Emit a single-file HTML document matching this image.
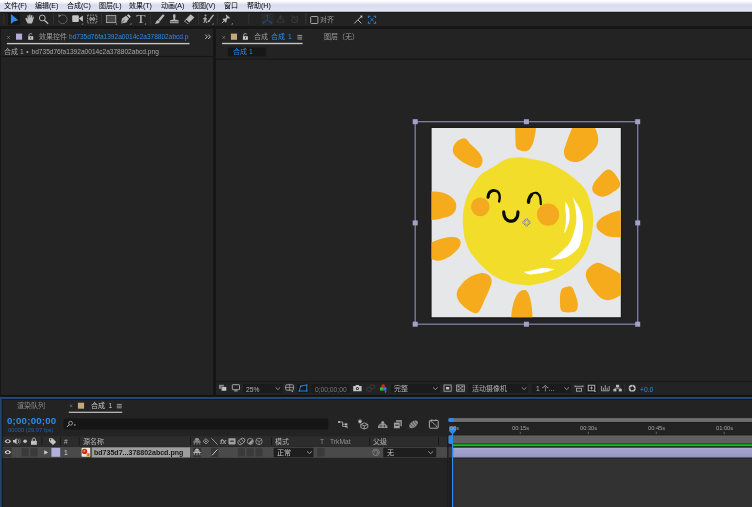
<!DOCTYPE html>
<html lang="zh-CN"><head><meta charset="utf-8"><title>After Effects</title>
<style>
html,body{margin:0;padding:0;background:#161616;}
body{width:752px;height:507px;position:relative;overflow:hidden;font-family:"Liberation Sans","Noto Sans CJK SC",sans-serif;color:#a8a8a8;}
.a{position:absolute;}
.t{position:absolute;white-space:nowrap;line-height:10px;height:10px;font-size:7px;will-change:transform;}
.l{font-size:6.7px;}
.b{color:#2d8ceb;}
#menubar{left:0;top:0;width:752px;height:11.8px;background:linear-gradient(#ffffff 0%,#f7f8fc 16%,#d8ddef 40%,#d8ddf0 58%,#e1e6f4 90%,#dcdfe9 100%);}
#menubar .t{color:#000;top:1px;}
#toolbar{left:0;top:11.6px;width:752px;height:14.5px;background:#232323;}
#leftpanel{left:1.3px;top:28.5px;width:212.2px;height:366.9px;background:#232323;}
#comppanel{left:215.5px;top:28.5px;width:536.5px;height:366.9px;background:#232323;}
#timeline{left:0;top:397px;width:752px;height:110px;background:#232323;}
.dd{position:absolute;background:#1b1b1b;border-radius:1.5px;}
svg{position:absolute;left:0;top:0;}
</style></head><body>
<div id="menubar" class="a">
<span class="t" style="left:4px">文件(F)</span>
<span class="t" style="left:35px">编辑(E)</span>
<span class="t" style="left:66.5px">合成(C)</span>
<span class="t" style="left:98.5px">图层(L)</span>
<span class="t" style="left:129px">效果(T)</span>
<span class="t" style="left:160.5px">动画(A)</span>
<span class="t" style="left:192.4px">视图(V)</span>
<span class="t" style="left:224.2px">窗口</span>
<span class="t" style="left:246.5px">帮助(H)</span>
</div>
<div id="toolbar" class="a"></div>
<div id="leftpanel" class="a"></div>
<div id="comppanel" class="a"></div>
<div id="timeline" class="a"></div>
<!--SUN-->
<svg id="sun" width="752" height="507" viewBox="0 0 752 507">
<!-- comp image -->
<rect x="430.2" y="126.6" width="192" height="192" fill="#1c1c1c"/>
<g transform="translate(431.6,128) scale(0.9958)">
<rect x="0" y="0" width="190" height="190" fill="#e6e7e8"/>
<clipPath id="cp"><rect x="0" y="0" width="190" height="190"/></clipPath>
<g clip-path="url(#cp)" fill="#f5ab1c">
<!-- rays -->
<path d="M21.3,21.7 C22,16 26,11.5 32.5,10.3 C35.5,10.5 37,13.5 38.5,15.8 C42,19 46,22 48.3,25.6 C50.5,28.5 52,32 50.9,34.5 C50.5,37.5 48.5,39.8 46.4,40 C44,40.3 41.5,39.5 39.4,38.5 C35,36.5 31,34.5 27.6,31.6 C24,29 21,26 21.3,21.7Z"/>
<path d="M-2,63.8 C3,63.8 8,64 11.8,65 C16,66.5 19.5,68.5 21.7,71 C24,73.5 25,76 24.7,78 C24.8,81 24,83 22.7,84.8 C20.5,87.5 17.5,89 13.8,89.7 C9,91.5 4,92.3 -2,92.5Z"/>
<path d="M83.8,-2 L84.4,17.8 C85,20 86,21.5 87.8,22 C90,23 92.5,23.5 94.7,23.3 C96.5,23 98,22 98.9,20.7 C101,18 102.3,15 102.8,11.8 C104,7 104.8,3 104.8,-2Z"/>
<path d="M141.7,-2 C139,6 136,12 134.4,17.8 C133.3,20.5 132.5,23 133,25.6 C133.3,28.5 134.8,31 137.3,32.5 C140.5,34.5 144,34.5 147.2,33.9 C150.5,33 153,31.5 155,29.6 C159,26.5 162.5,23.5 165,19.7 C166.5,17.5 167.5,14.5 167.3,11.8 C167.5,7 165.5,2.5 163,-2Z"/>
<path d="M176.8,41.8 C173.5,43 171,45.5 168.9,48.3 C165.5,51.5 162.5,55 161.4,59.2 C160.8,62 161.8,64.5 164,66 C166.5,68 169,69 171.9,69 C176,68.5 179.5,66.5 182.7,64 C185,62.5 187.5,61 188.6,59.2 C189.5,57.5 189.5,55 188.6,53.3 C187,50 185,47 182.7,44.4 C181,42.5 179,41.2 176.8,41.8Z"/>
<path d="M192,82.5 C186,83 181,84.8 176.8,86.8 C173,88.3 170,90.3 167.9,92.7 C166.3,94.5 165.5,96.3 165.5,98 C165.5,100 166.5,101.8 167.9,103 C170.5,105.5 173.5,107.5 176.8,108.7 C181,109.8 186,110 192,109.7Z"/>
<path d="M166,135.4 C162.5,136.5 159.5,138.5 157,141.3 C155,143.5 154.5,146.5 155,149.2 C156,153.5 158.5,157.5 161,161 C163.5,164.5 166,167.5 168.9,169.9 C172,172 175.5,173.3 178.8,172.8 C183,172 187,170 192,166.5 L192,148 C186,144 180.5,141 174.8,138.3 C172,136.8 169,135 166,135.4Z"/>
<path d="M131.4,161 C133.5,160 136,159.3 138.3,159 C140.3,159 141.5,160.3 142.3,162 C143.8,165.5 145.2,169 146.2,172.8 C146.9,175.8 147,178.6 146.4,181.4 C145.7,183.4 144,184.6 142.3,184.9 C139,185.5 135.5,185.5 132.4,184.9 C130.6,184.2 129.6,182.5 129.2,180.5 C128.8,176 128.8,172.5 129,168.9 C129.2,166 129.8,162.5 131.4,161Z"/>
<path d="M79.9,192 C80,186.5 80.8,181.5 81.9,176.8 C83,172.5 84.5,168.8 86.8,165.9 C88.3,164 90.3,162.8 92.7,162.6 C93.5,162.5 94.3,162.6 94.9,163 C97,165 98.2,168 98.9,170.9 C100.5,177 101.2,183 101.4,192Z"/>
<path d="M49.3,145.8 C45.8,146.3 42.5,147.5 39.4,149.2 C35,151.8 31.3,155 28.6,159 C26.5,161.5 25.3,164 25.2,166.9 C25.3,170.5 27,174 29.6,176.8 C33,180.5 37.5,183.8 42.4,185.7 C44.3,186.3 46,186 47.3,184.7 C49.5,181.8 51,178.5 52.3,174.8 C54.8,169.5 57.3,164.5 59.2,159 C60,157 60.5,155 60.2,153 C60,150.5 58.5,148.3 56.2,147.2 C54,146 51.5,145.5 49.3,145.8Z"/>
<path d="M-2,115.5 C3,113.5 7.5,111.8 11.8,110.7 C15.5,109.8 20,109.3 23.7,109.7 C26.5,110 28.8,112 29.2,114.6 C29.3,117.5 27.8,120.3 25.6,122.5 C22.3,126 18.5,129.3 13.8,131.4 C11.5,132.5 8.5,133.5 5.9,133.4 C3,133.3 0,132 -2,130Z"/>
</g>
<!-- body -->
<path clip-path="url(#cp)" fill="#f2de2a" d="M84.8,29.5 C87.5,29.4 90.0,29.6 92.7,29.9 C95.4,30.2 98.0,30.6 100.7,31.1 C103.4,31.6 105.9,32.0 108.8,32.7 C111.7,33.4 114.8,33.9 118.0,35.1 C121.2,36.3 124.7,38.1 127.8,39.8 C130.9,41.5 133.7,43.4 136.7,45.5 C139.7,47.6 142.9,50.2 145.6,52.6 C148.3,55.0 150.9,57.3 152.8,59.8 C154.7,62.3 156.0,64.9 157.2,67.8 C158.4,70.7 159.3,74.6 160.0,77.3 C160.7,80.0 161.2,81.1 161.6,84.0 C162.0,86.9 162.4,90.6 162.2,94.6 C162.0,98.6 161.2,104.6 160.6,108.0 C160.0,111.4 159.1,112.9 158.4,115.0 C157.7,117.1 157.6,118.4 156.6,120.7 C155.6,123.0 154.1,126.3 152.4,128.9 C150.7,131.5 148.6,133.8 146.2,136.2 C143.8,138.6 141.1,141.2 138.0,143.4 C134.9,145.6 131.7,147.7 127.7,149.6 C123.8,151.5 119.1,153.3 114.3,154.7 C109.5,156.1 102.8,157.4 98.8,157.8 C94.8,158.2 93.5,157.7 90.4,157.4 C87.3,157.1 83.4,156.7 80.0,155.8 C76.6,154.9 73.2,153.7 69.8,152.1 C66.4,150.5 63.0,149.0 59.5,146.5 C56.0,144.0 52.0,140.1 49.1,137.2 C46.2,134.3 44.0,131.7 41.9,128.9 C39.8,126.2 38.2,123.4 36.8,120.7 C35.4,118.0 34.5,115.3 33.7,112.5 C32.9,109.7 32.5,106.9 32.1,103.6 C31.7,100.3 31.3,96.4 31.3,92.8 C31.3,89.2 31.5,85.5 32.1,81.9 C32.7,78.3 33.7,74.3 34.8,71.0 C35.9,67.7 37.1,65.5 38.9,62.3 C40.7,59.1 43.5,54.4 45.4,51.7 C47.3,49.0 47.7,48.0 50.1,46.1 C52.5,44.2 56.7,42.2 60.0,40.2 C63.3,38.2 66.9,35.7 69.7,34.1 C72.5,32.5 74.2,31.5 76.7,30.7 C79.2,29.9 82.1,29.6 84.8,29.5 Z"/>
<!-- cheeks -->
<circle cx="48.9" cy="79.2" r="9.4" fill="#f4aa20"/>
<circle cx="117" cy="86.9" r="11.2" fill="#f4aa20"/>
<!-- eyes / mouth -->
<g fill="none" stroke="#0b0b0b" stroke-linecap="round">
<path stroke-width="3.1" d="M56.7,69.6 C57,65.8 59,63 62,62.8"/>
<path stroke-width="2.4" d="M62,62.8 C65.5,62.8 67.6,64.5 68.2,67.2 C68.7,69.5 68.4,72 67.8,73.8"/>
<path stroke-width="3.4" d="M97.3,74.5 C97.5,71.5 98.7,68.6 100.4,66.9"/>
<path stroke-width="2.2" d="M100.4,66.9 C101.8,65.3 103.5,64.9 104.9,65.1 C107,65.6 108.3,67.3 108.9,69.2 C109.5,71.5 109.7,74 109.7,76.5"/>
<path stroke-width="3.2" d="M72.4,84.3 C72.4,87 73,89.3 74.2,90.8 C75.8,92.8 77.8,93.6 79.9,93.6 C82.3,93.5 84.3,92.3 85.6,90 C86.5,88.3 86.7,86.3 86.7,84.3"/>
</g>
<!-- highlights -->
<g fill="#ffffff">
<path d="M141.2,68.2 C141.6,68.9 142.5,70.4 143.6,72.3 C144.7,74.2 146.8,76.7 148.0,79.4 C149.2,82.1 150.4,85.4 151.1,88.4 C151.8,91.4 151.9,94.2 152.0,97.2 C152.1,100.2 151.9,103.7 151.6,106.2 C151.3,108.8 150.9,110.4 150.3,112.5 C149.8,114.6 149.3,116.8 148.3,118.7 C147.3,120.6 146.1,122.1 144.2,123.8 C142.3,125.5 139.4,127.7 137.0,129.0 C134.6,130.3 132.6,131.0 129.7,131.5 C126.8,132.0 121.1,131.9 119.4,132.0 C120.4,131.3 123.5,129.5 125.6,128.0 C127.7,126.5 129.9,124.5 131.8,122.8 C133.7,121.1 135.6,119.3 137.0,117.6 C138.4,115.9 139.3,114.1 140.1,112.5 C140.9,110.9 141.1,110.2 141.8,108.0 C142.5,105.8 143.9,102.0 144.5,99.0 C145.1,96.0 145.4,93.1 145.4,90.1 C145.4,87.1 144.9,84.2 144.5,81.2 C144.1,78.2 143.2,74.5 142.7,72.3 C142.1,70.1 141.4,68.9 141.2,68.2 Z"/>
<path d="M134.3,73.9 C134.8,74.8 136.7,77.1 137.4,79.4 C138.1,81.7 138.6,84.8 138.7,87.5 C138.8,90.2 138.5,92.8 137.8,95.5 C137.1,98.2 135.5,101.8 134.7,103.5 C133.9,105.2 133.4,105.1 133.1,105.4 C133.4,103.8 134.4,98.3 134.7,95.5 C135.0,92.7 135.0,90.8 134.9,88.4 C134.8,86.0 134.4,83.6 134.3,81.2 C134.2,78.8 134.3,75.1 134.3,73.9 Z"/>
<path d="M92.8,144.3 C93.8,144.2 96.1,144.0 98.8,143.4 C101.5,142.8 106.2,141.2 109.1,140.8 C112.0,140.4 113.6,140.7 116.0,140.9 C118.4,141.1 122.2,141.7 123.5,141.9 C122.4,142.3 119.0,143.6 117.0,144.2 C115.0,144.8 113.4,145.1 111.2,145.5 C109.0,145.9 106.1,146.3 104.0,146.6 C101.9,146.8 100.2,147.1 98.8,147.0 C97.4,146.9 96.5,146.8 95.5,146.3 C94.5,145.9 93.2,144.6 92.8,144.3 Z"/>
</g>
<!-- anchor -->
<g stroke="#6e6a55" stroke-width="1.5" fill="none">
<circle cx="95.4" cy="94.8" r="2.3"/>
<path d="M95.4,90.4 L95.4,92.5 M95.4,97.1 L95.4,99.2 M91,94.8 L93.1,94.8 M97.7,94.8 L99.8,94.8"/>
</g>
<g stroke="#d9d6b4" stroke-width="0.8" fill="none">
<circle cx="95.4" cy="94.8" r="2.3"/>
<path d="M95.4,90.4 L95.4,92.5 M95.4,97.1 L95.4,99.2 M91,94.8 L93.1,94.8 M97.7,94.8 L99.8,94.8"/>
</g>
</g>
<!-- selection box -->
<g fill="none" stroke="#807fa6" stroke-width="1.3">
<rect x="415.2" y="121.7" width="222.5" height="202.5"/>
</g>
<g fill="#a2a1cb">
<rect x="412.7" y="119.2" width="5" height="5"/><rect x="523.9" y="119.2" width="5" height="5"/><rect x="635.2" y="119.2" width="5" height="5"/>
<rect x="412.7" y="220.4" width="5" height="5"/><rect x="635.2" y="220.4" width="5" height="5"/>
<rect x="412.7" y="321.7" width="5" height="5"/><rect x="523.9" y="321.7" width="5" height="5"/><rect x="635.2" y="321.7" width="5" height="5"/>
</g>
</svg>

<!--/SUN-->
<svg id="chrome" width="752" height="507" viewBox="0 0 752 507">
<!-- toolbar -->
<rect x="0" y="11.8" width="752" height="1" fill="#191919"/>
<rect x="3.2" y="13.5" width="1.2" height="11" fill="#303030"/>
<rect x="8" y="12.8" width="12" height="12" rx="1" fill="#161616"/>
<path d="M10.9,14.1 L10.9,24 L13.7,21.6 L18.3,20.3 Z" fill="#2d8ceb"/>
<g fill="#b9b9b9" stroke="none">
<!-- hand -->
<path d="M25.2,18.4 L26.6,17.8 L27.6,19.6 L27.3,15.4 L28.4,15.2 L29,18 L29.2,14.6 L30.4,14.6 L30.6,18 L31.3,15 L32.4,15.2 L32.1,18.6 L33,16.6 L33.9,17 L32.8,21.4 L31.8,23.6 L27.8,23.6 L26.6,21.6 Z"/>
</g>
<!-- zoom -->
<g fill="none" stroke="#b4b4b4" stroke-width="1"><circle cx="42.3" cy="18" r="2.9"/><path d="M44.4,20.2 L48.2,23.7" stroke-width="1.4"/></g>
<g fill="#383838"><rect x="53" y="13.5" width="0.8" height="11"/><rect x="101" y="13.5" width="0.8" height="11"/><rect x="149.9" y="13.5" width="0.8" height="11"/><rect x="198" y="13.5" width="0.8" height="11"/><rect x="217.3" y="13.5" width="0.8" height="11"/><rect x="248.5" y="13.5" width="0.8" height="11"/><rect x="305.3" y="13.5" width="1.1" height="11"/></g>
<!-- rotate -->
<path d="M59.6,16.2 A4.4,4.4 0 1 1 58.5,20.5" fill="none" stroke="#5e5e5e" stroke-width="1"/>
<path d="M58.2,14.6 L61.4,15.2 L58.8,17.6 Z" fill="#8a8a8a"/>
<!-- camera -->
<rect x="72.2" y="15.3" width="6.6" height="6.7" rx="1" fill="#c4c4c4"/><path d="M78.8,18.6 L82.9,15.6 L82.9,21.8 Z" fill="#c4c4c4"/>
<path d="M83.2,23 L83.2,24.6 L81.6,24.6 Z" fill="#a0a0a0"/>
<!-- pan behind -->
<g fill="none" stroke="#b0b0b0" stroke-width="0.9" stroke-dasharray="1.4 1.1"><rect x="87.6" y="15.1" width="9.2" height="7.8"/></g>
<path d="M90,16.8 L92.2,19 L94.4,16.8 M90,21.2 L92.2,19 L94.4,21.2" stroke="#9a9a9a" stroke-width="1.1" fill="none"/>
<path d="M88.6,19 L90.6,17.8 L90.6,20.2 Z M95.8,19 L93.8,17.8 L93.8,20.2Z" fill="#b0b0b0"/>
<!-- rect tool -->
<rect x="106.4" y="15.4" width="9.4" height="7.2" fill="#474747" stroke="#a9a9a9" stroke-width="0.9"/>
<path d="M117,23 L117,24.6 L115.4,24.6 Z M131.4,23 L131.4,24.6 L129.8,24.6 Z M146,23 L146,24.6 L144.4,24.6 Z M213.6,23 L213.6,24.6 L212,24.6 Z M232.8,22.8 L232.8,24.4 L231.2,24.4 Z" fill="#a0a0a0"/>
<!-- pen -->
<path d="M121,23.4 L122,18.6 L126,15.8 L129,18.6 L126.4,22.4 Z" fill="#b9b9b9"/>
<path d="M126.8,15.2 L128.4,14.2 L130.8,16.6 L129.8,18 Z" fill="#cfcfcf"/>
<path d="M121.4,23 L124.6,19.8" stroke="#232323" stroke-width="0.7"/>
<!-- brush -->
<path d="M162.9,14.2 L164.6,15.4 L160,21.2 L158,19.8 Z" fill="#b9b9b9"/>
<path d="M157.6,20 L160,21.6 C159.4,23.4 157.2,24 154.7,23.7 C156,22.8 156,21 157.6,20Z" fill="#b9b9b9"/>
<!-- stamp -->
<path d="M173.4,14.2 L175.2,14.2 L175.6,16 L175,19.4 L178.4,20.2 L179,21.6 L169.6,21.6 L170.2,20.2 L173.6,19.4 L173,16 Z" fill="#b9b9b9"/>
<rect x="170" y="22.2" width="8.6" height="1" fill="#b9b9b9"/>
<!-- eraser -->
<path d="M184,21.2 L190.6,14.3 L194.4,17.6 L187.8,24.1 Z" fill="#b9b9b9"/>
<path d="M184.9,21.2 L186.3,19.8 L189.3,22.5 L187.9,23.5 Z" fill="#232323"/>
<!-- roto -->
<circle cx="205.5" cy="15.4" r="1" fill="#a4a4a4"/>
<path d="M203,18.4 L205.4,17 L207,18.4 L206.2,20.2 L207.2,23 L206,23 L205.2,20.8 L204.4,23 L203.4,23 L204.4,19.4 L203.4,19.6 Z" fill="#a4a4a4"/>
<path d="M213,14.4 L214,15.2 L210.4,20 L209.2,19.2 Z" fill="#b9b9b9"/>
<path d="M209,19.4 L210.4,20.4 C209.8,21.8 208.6,22.2 207,22.2 C208,21.4 208,20.2 209,19.4Z" fill="#b9b9b9"/>
<!-- pin -->
<path d="M226.2,14.6 L230.2,18 L229,18.6 L227.6,18.2 L226.4,20.6 L226.6,22.2 L225.6,22.4 L222.6,19.6 L223.2,18.6 L224.8,18.8 L226.6,17.2 L225.8,15.6 Z" fill="#b9b9b9"/>
<path d="M224.2,20.8 L221.8,23.2" stroke="#b9b9b9" stroke-width="0.9"/>
<!-- axis modes -->
<rect x="261.2" y="13.4" width="12.4" height="11.6" rx="1" fill="#2a2a2a"/>
<g stroke="#1f4d7e" stroke-width="0.9" fill="#1f4d7e"><path d="M267.4,15.8 L267.4,20 L263.6,22.6 M267.4,20 L271.2,22.6" fill="none"/><circle cx="267.4" cy="15.8" r="0.7"/><circle cx="263.6" cy="22.6" r="0.7"/><circle cx="271.2" cy="22.6" r="0.7"/></g>
<g stroke="#3f3f3f" stroke-width="0.8" fill="none"><path d="M280.6,15.6 L276.8,22.2 L284.4,22.2 Z M280.6,15.6 L280.6,19.6"/><path d="M291.4,15.4 L297.6,21.8 M291.8,18 L297.4,16.4 L297.2,22.4 L292,22.2 Z"/></g>
<!-- snapping -->
<rect x="310.7" y="16.5" width="7.2" height="7" rx="0.8" fill="none" stroke="#a4a4a4" stroke-width="1"/>
<path d="M354.4,23.4 L357.8,19.8 L361.4,23.4 M357.8,19.8 L361.6,16.4" stroke="#b4b4b4" stroke-width="1" fill="none"/><path d="M362.4,15.6 L362.2,18.2 L359.8,15.8 Z" fill="#c4c4c4"/>
<g stroke="#2a7fd4" stroke-width="1.1" fill="none"><path d="M368.4,18 L368.4,16.2 L370.4,16.2 M373.6,16.2 L375.6,16.2 L375.6,18 M375.6,21.4 L375.6,23.2 L373.6,23.2 M370.4,23.2 L368.4,23.2 L368.4,21.4"/><path d="M370.4,18.2 L373.6,21.2 M373.6,18.2 L370.4,21.2" stroke-width="0.9"/></g>

<!-- left panel tab -->
<path d="M7.2,36 L9.8,38.8 M9.8,36 L7.2,38.8" stroke="#8c8c8c" stroke-width="0.6" fill="none"/>
<rect x="16" y="33.6" width="6.1" height="6.1" fill="#b0addb"/>
<g fill="#c9c9c9"><rect x="28.2" y="36.2" width="5" height="3.6"/><path d="M29,36.4 L29,34.8 C29,33.4 31.6,33.2 32.2,34.4" stroke="#c9c9c9" stroke-width="0.8" fill="none"/></g>
<rect x="30.3" y="37.2" width="0.9" height="1.4" fill="#232323"/>
<rect x="6.9" y="42.9" width="182.6" height="1.4" fill="#c4c4c4"/>
<rect x="1.3" y="55.9" width="212" height="1.2" fill="#171717"/>
<path d="M205.2,34.6 L207.4,36.8 L205.2,39 M208.2,34.6 L210.4,36.8 L208.2,39" stroke="#d0d0d0" stroke-width="0.9" fill="none"/>
<!-- comp panel tab -->
<path d="M222.4,36 L225,38.8 M225,36 L222.4,38.8" stroke="#8c8c8c" stroke-width="0.6" fill="none"/>
<rect x="230.9" y="33.6" width="6.1" height="6.2" fill="#c4a877"/>
<g fill="#c9c9c9"><rect x="242.9" y="36.2" width="5" height="3.6"/><path d="M243.7,36.4 L243.7,34.8 C243.7,33.4 246.3,33.2 246.9,34.4" stroke="#c9c9c9" stroke-width="0.8" fill="none"/></g>
<rect x="245" y="37.2" width="0.9" height="1.4" fill="#232323"/>
<path d="M297.4,35.4 L302.2,35.4 M297.4,37.2 L302.2,37.2 M297.4,39 L302.2,39" stroke="#b4b4b4" stroke-width="0.8"/>
<rect x="222" y="42.8" width="80.6" height="1.4" fill="#c4c4c4"/>
<rect x="227.9" y="47.6" width="37.9" height="8.9" rx="1" fill="#171717"/>
<rect x="215.6" y="58.6" width="536.4" height="1" fill="#171717"/>
</svg>
<svg id="vbar" width="752" height="507" viewBox="0 0 752 507">
<rect x="215.6" y="381.2" width="536.4" height="1" fill="#171717"/>
<!-- always preview -->
<g><rect x="219" y="384.8" width="5" height="4" fill="#8a8a8a"/><rect x="221.2" y="386.8" width="5.4" height="4.2" fill="#c4c4c4" stroke="#232323" stroke-width="0.5"/></g>
<!-- monitor -->
<rect x="232.3" y="384.7" width="7.2" height="5" rx="0.6" fill="none" stroke="#b4b4b4" stroke-width="0.9"/><rect x="234.2" y="390.4" width="3.4" height="1" fill="#b4b4b4"/>
<!-- dropdown 25% -->
<rect x="243" y="384" width="39.6" height="8.8" rx="1" fill="#1b1b1b"/>
<path d="M275.6,387.4 L277.9,389.6 L280.2,387.4" stroke="#a9a9a9" stroke-width="0.8" fill="none"/>
<!-- grid -->
<rect x="285.8" y="384.8" width="7.6" height="5.4" rx="0.6" fill="none" stroke="#b4b4b4" stroke-width="0.8"/><path d="M289.6,383.8 L289.6,391 M285,387.5 L294.2,387.5" stroke="#b4b4b4" stroke-width="0.6"/><path d="M291.4,391 L293.4,391 L292.4,392.2 Z" fill="#b4b4b4"/>
<!-- mask -->
<rect x="297" y="383.8" width="12" height="9.2" rx="1" fill="#171717"/>
<path d="M299.2,391 L300.8,386 L306.8,385 L306.8,391 Z" fill="none" stroke="#2d8ceb" stroke-width="0.9"/>
<g fill="#2d8ceb"><rect x="298.6" y="390.3" width="1.3" height="1.3"/><rect x="300.2" y="385.4" width="1.3" height="1.3"/><rect x="306.2" y="384.4" width="1.3" height="1.3"/><rect x="306.2" y="390.3" width="1.3" height="1.3"/></g>
<!-- timecode -->
<rect x="310.5" y="384" width="39.8" height="8.8" rx="1" fill="#1b1b1b"/>
<!-- camera -->
<path d="M353.2,386 L355.4,386 L356,385 L358.8,385 L359.4,386 L361.6,386 L361.6,391.2 L353.2,391.2 Z" fill="#c4c4c4"/><circle cx="357.4" cy="388.5" r="1.5" fill="#232323"/><circle cx="357.4" cy="388.5" r="0.7" fill="#c4c4c4"/>
<!-- show snapshot (dim) -->
<g fill="none" stroke="#3d3d3d" stroke-width="0.9"><ellipse cx="369" cy="389.4" rx="2.6" ry="2"/><ellipse cx="372.4" cy="386.8" rx="2.6" ry="2"/></g>
<!-- rgb -->
<circle cx="383.2" cy="386.1" r="1.9" fill="#e02020"/><circle cx="381.6" cy="388.9" r="1.9" fill="#20c030"/><circle cx="384.8" cy="388.9" r="1.9" fill="#3a6ff0"/>
<path d="M384.6,391.6 L386.6,391.6 L385.6,392.8 Z" fill="#b4b4b4"/>
<!-- dropdown full -->
<rect x="391" y="384" width="48.8" height="8.8" rx="1" fill="#1b1b1b"/>
<path d="M433.1,387.4 L435.4,389.6 L437.7,387.4" stroke="#a9a9a9" stroke-width="0.8" fill="none"/>
<!-- region of interest -->
<rect x="444" y="385" width="7.2" height="6.2" fill="none" stroke="#b4b4b4" stroke-width="0.8"/><rect x="446" y="387" width="3.2" height="2.4" fill="#c4c4c4"/>
<!-- transparency grid -->
<rect x="456.7" y="385" width="7.6" height="6.2" fill="none" stroke="#b4b4b4" stroke-width="0.8"/>
<g fill="#9a9a9a"><rect x="457.6" y="385.9" width="1.9" height="1.5"/><rect x="461.4" y="385.9" width="1.9" height="1.5"/><rect x="459.5" y="387.4" width="1.9" height="1.5"/><rect x="457.6" y="388.9" width="1.9" height="1.5"/><rect x="461.4" y="388.9" width="1.9" height="1.5"/></g>
<!-- dropdown camera -->
<rect x="468.3" y="384" width="59.4" height="8.8" rx="1" fill="#1b1b1b"/>
<path d="M521.8,387.4 L524.1,389.6 L526.4,387.4" stroke="#a9a9a9" stroke-width="0.8" fill="none"/>
<rect x="531.8" y="384" width="39.3" height="8.8" rx="1" fill="#1b1b1b"/>
<path d="M564.4,387.4 L566.7,389.6 L569,387.4" stroke="#a9a9a9" stroke-width="0.8" fill="none"/>
<!-- icons right -->
<path d="M575,385.4 L575,387.2 M583,385.4 L583,387.2 M575,386.3 L583,386.3" stroke="#b4b4b4" stroke-width="0.8" fill="none"/><rect x="576.6" y="388.2" width="4.8" height="3" fill="none" stroke="#b4b4b4" stroke-width="0.8"/>
<rect x="586" y="383.8" width="11" height="9.2" rx="1" fill="#171717"/>
<rect x="588.2" y="385.2" width="6.6" height="5.6" fill="none" stroke="#c4c4c4" stroke-width="0.9"/><path d="M589.8,388 L593.2,388 M591.5,386.4 L591.5,389.6" stroke="#c4c4c4" stroke-width="0.7"/><path d="M594,391 L596,391 L595,392.2 Z" fill="#c4c4c4"/>
<path d="M601.4,386 L601.4,390.8 L609.2,390.8 L609.2,386" fill="none" stroke="#b4b4b4" stroke-width="0.8"/><path d="M603.4,390.4 L603.4,387.6 M605.3,390.4 L605.3,385 M607.2,390.4 L607.2,387.6" stroke="#b4b4b4" stroke-width="0.8"/>
<g fill="#b9b9b9"><rect x="616" y="384.8" width="3.2" height="2.4"/><rect x="613.4" y="389" width="3" height="2.4"/><rect x="618.8" y="389" width="3" height="2.4"/></g><path d="M617.6,387.2 L617.6,388.2 M614.9,389 L614.9,388.2 L620.3,388.2 L620.3,389" stroke="#b9b9b9" stroke-width="0.7" fill="none"/>
<rect x="624.4" y="384.4" width="0.7" height="8" fill="#383838"/>
<circle cx="632.2" cy="388.3" r="2.7" fill="none" stroke="#c4c4c4" stroke-width="1.6"/>
<path d="M632.2,385 L633.4,388.3 M635.4,388.3 L632.2,389.5 M632.2,391.6 L631,388.3 M629,388.3 L632.2,387.1" stroke="#232323" stroke-width="0.5"/>
</svg>
<svg id="tl" width="752" height="507" viewBox="0 0 752 507">
<rect x="0" y="395.4" width="752" height="1.5" fill="#131211"/><rect x="0" y="396.9" width="752" height="2.2" fill="#24466f"/>
<rect x="0" y="396.8" width="1.8" height="111" fill="#24466f"/>
<rect x="1.8" y="399.1" width="750.2" height="0.8" fill="#171615"/>
<rect x="1.8" y="399" width="0.8" height="108" fill="#181818"/>
<!-- tabs -->
<path d="M70,404.6 L72.2,407 M72.2,404.6 L70,407" stroke="#8c8c8c" stroke-width="0.6" fill="none"/>
<rect x="77.9" y="402.7" width="6.2" height="6" fill="#c4a877"/>
<path d="M116.8,404.4 L121.8,404.4 M116.8,406.1 L121.8,406.1 M116.8,407.8 L121.8,407.8" stroke="#b4b4b4" stroke-width="0.8"/>
<rect x="68.8" y="411.7" width="53.4" height="1.2" fill="#c4c4c4"/>
<!-- search -->
<rect x="63.5" y="418.6" width="264.8" height="10.8" rx="1.6" fill="#161616"/>
<circle cx="70.6" cy="423.2" r="1.9" fill="none" stroke="#b4b4b4" stroke-width="0.8"/><path d="M69.2,424.6 L66.9,427" stroke="#b4b4b4" stroke-width="1"/><path d="M73.6,424.6 L76,424.6 L74.8,426 Z" fill="#b4b4b4"/>
<!-- header icons right of search -->
<g stroke="#b9b9b9" stroke-width="0.8" fill="#b9b9b9"><path d="M338.4,422 L342.6,422 M342.6,422 L342.6,426.4 L345.6,426.4 M342.6,424.2 L345.6,424.2" fill="none"/><rect x="338" y="421.2" width="2" height="1.6" stroke="none"/><rect x="345" y="423.4" width="2.4" height="1.6" stroke="none"/><rect x="345" y="425.6" width="2.4" height="1.6" stroke="none"/><path d="M346.4,427.6 L348,427.6 L347.2,428.6 Z" stroke="none"/></g>
<g fill="none" stroke="#b9b9b9" stroke-width="0.8"><circle cx="360" cy="421.6" r="1.4" fill="#b9b9b9"/><path d="M364.2,422.8 L367.8,424.4 L367.8,427.6 L364.2,429 L360.8,427.6 L360.8,424.4 Z M360.8,424.4 L364.2,425.8 L367.8,424.4 M364.2,425.8 L364.2,429"/><path d="M358,419.6 L358.8,420.4 M362,419.6 L361.2,420.4 M360,418.8 L360,419.8" stroke-width="0.5"/></g>
<g fill="#9c9c9c"><circle cx="382.7" cy="422.6" r="1.5"/><path d="M380.6,423.6 L384.8,423.6 L387.4,425.8 L387.4,428 L378,428 L378,425.8 Z"/></g><path d="M381,424.6 L381,427.6 M384.4,424.6 L384.4,427.6" stroke="#232323" stroke-width="0.6"/><path d="M378,426 L387.4,426" stroke="#232323" stroke-width="0.4"/>
<g><rect x="396" y="420" width="6" height="6.2" fill="#858585"/><rect x="393.8" y="422.2" width="6.2" height="6.4" fill="#a4a4a4" stroke="#232323" stroke-width="0.6"/><rect x="395.2" y="424.6" width="3.4" height="1.2" fill="#303030"/></g>
<g transform="rotate(-38 413.6 424.3)"><ellipse cx="413.6" cy="424.3" rx="5" ry="3" fill="#8e8e8e"/><path d="M411.2,421.6 L411.2,427 M413.6,421.4 L413.6,427.2 M416,421.6 L416,427" stroke="#3a3a3a" stroke-width="0.6"/></g>
<rect x="429.4" y="420.4" width="8.8" height="7.8" rx="0.8" fill="none" stroke="#b9b9b9" stroke-width="0.9"/><path d="M430.4,421.2 C433,422.2 435,424.4 437.4,427.4" fill="none" stroke="#b9b9b9" stroke-width="0.8"/><path d="M431.8,419.4 L431.8,420.4 M435.8,419.4 L435.8,420.4" stroke="#b9b9b9" stroke-width="0.8"/>
<!-- column header -->
<rect x="2.6" y="436.2" width="444.8" height="10.2" fill="#2c2c2c"/>
<g fill="#111"><rect x="41.6" y="437.4" width="0.7" height="7.8"/><rect x="60.2" y="437.4" width="0.7" height="7.8"/><rect x="78.8" y="437.4" width="0.7" height="7.8"/><rect x="190.3" y="437.4" width="0.7" height="7.8"/><rect x="271.3" y="437.4" width="0.7" height="7.8"/><rect x="369.4" y="437.4" width="0.7" height="7.8"/><rect x="438" y="437.4" width="0.7" height="7.8"/></g>
<!-- header: eye, speaker, solo, lock, tag, # -->
<g id="eye"><path d="M4.6,441.3 C6.2,438.6 9.4,438.6 11,441.3 C9.4,444 6.2,444 4.6,441.3Z" fill="#c4c4c4"/><circle cx="7.8" cy="441.3" r="1.3" fill="#2c2c2c"/></g>
<path d="M13,440 L14.6,440 L16.6,438.2 L16.6,444.4 L14.6,442.6 L13,442.6 Z" fill="#c4c4c4"/><path d="M17.6,439.2 C19.2,440.4 19.2,442.2 17.6,443.4" stroke="#c4c4c4" stroke-width="0.8" fill="none"/><path d="M18.8,438.2 C21,440 21,442.6 18.8,444.4" stroke="#8a8a8a" stroke-width="0.7" fill="none"/>
<circle cx="25.1" cy="441.3" r="1.8" fill="#c4c4c4"/>
<rect x="31" y="440.8" width="5.8" height="4" fill="#c4c4c4"/><path d="M32.3,440.8 L32.3,439.6 C32.3,437.6 35.5,437.6 35.5,439.6 L35.5,440.8" stroke="#c4c4c4" stroke-width="0.9" fill="none"/>
<path d="M49,438.2 L52.4,438.2 L56.2,442 L53,445 L49,441.2 Z" fill="#c4c4c4"/><circle cx="50.6" cy="439.8" r="0.7" fill="#2c2c2c"/>
<!-- switches header -->
<g fill="#a0a0a0"><path d="M194.4,441.4 C194.4,439.2 195.8,438 197,438 C198.2,438 199.6,439.2 199.6,441.4 Z"/><rect x="193.2" y="441.5" width="7.6" height="1"/><path d="M194.6,442.6 L194,444.6 M197,442.6 L197,444.8 M199.4,442.6 L200,444.6" stroke="#a0a0a0" stroke-width="0.8" fill="none"/></g><rect x="195.4" y="439.8" width="1" height="0.9" fill="#2c2c2c"/><rect x="197.6" y="439.8" width="1" height="0.9" fill="#2c2c2c"/>
<path d="M205.9,438.6 L208.6,441.3 L205.9,444 L203.2,441.3 Z" fill="none" stroke="#a0a0a0" stroke-width="0.9"/><circle cx="205.9" cy="441.3" r="0.9" fill="#a0a0a0"/>
<path d="M211.4,438.2 L217.6,444.6" stroke="#a0a0a0" stroke-width="0.9"/>
<rect x="228.4" y="438.2" width="7.2" height="6.4" rx="0.8" fill="#a0a0a0"/><rect x="230.2" y="440.6" width="3.6" height="1.2" fill="#2c2c2c"/>
<g transform="rotate(-38 241.4 441.4)"><ellipse cx="241.4" cy="441.4" rx="4" ry="2.5" fill="none" stroke="#a0a0a0" stroke-width="0.8"/><path d="M240,439.2 L240,443.6 M242.8,439.2 L242.8,443.6" stroke="#a0a0a0" stroke-width="0.7"/></g>
<circle cx="250.3" cy="441.4" r="3" fill="none" stroke="#a0a0a0" stroke-width="0.8"/><path d="M248.2,443.5 A3,3 0 0 0 252.4,439.3 Z" fill="#a0a0a0"/>
<circle cx="259" cy="441.4" r="3.2" fill="none" stroke="#a0a0a0" stroke-width="0.8"/><path d="M259,441.6 L256.4,440 M259,441.6 L261.6,440 M259,441.6 L259,444.4" stroke="#a0a0a0" stroke-width="0.7"/>
<!-- layer row -->
<rect x="2.6" y="446.9" width="444.8" height="10.9" fill="#4a4a4a"/>
<rect x="2.6" y="447.4" width="9" height="9.8" fill="#353535"/>
<path d="M4.6,452.2 C6.2,449.6 9.4,449.6 11,452.2 C9.4,454.8 6.2,454.8 4.6,452.2Z" fill="#d4d4d4"/><circle cx="7.8" cy="452.2" r="1.3" fill="#353535"/>
<rect x="21.5" y="448.2" width="7.2" height="8.2" fill="#3a3a3a"/><rect x="30.3" y="448.2" width="7.4" height="8.2" fill="#3a3a3a"/>
<path d="M44.2,450.2 L48.2,452.4 L44.2,454.6 Z" fill="#c9c9c9"/>
<rect x="51.4" y="447.8" width="8.8" height="9" fill="#b3b0dc"/>
<!-- file icon -->
<rect x="81.6" y="447.8" width="8.6" height="9" rx="0.8" fill="#efe9d8"/><circle cx="84.6" cy="451.4" r="2.6" fill="#d9261c"/><circle cx="84.3" cy="451" r="1" fill="#f0a020"/><rect x="86.6" y="453" width="3.2" height="3.4" fill="#e8a413"/><path d="M87.4,455.6 L88.2,453.8 L89,455.6 Z" fill="#7a3b00"/>
<!-- name box -->
<rect x="91.9" y="447.4" width="98.1" height="10" fill="#9d9d9d"/>
<!-- switches -->
<rect x="193" y="447.8" width="8" height="9" fill="#353535"/>
<g fill="#bcbcbc"><path d="M194.4,452 C194.4,449.8 195.8,448.6 197,448.6 C198.2,448.6 199.6,449.8 199.6,452 Z"/><rect x="193.2" y="452.1" width="7.6" height="1"/><path d="M194.6,453.2 L194,455.2 M197,453.2 L197,455.4 M199.4,453.2 L200,455.2" stroke="#bcbcbc" stroke-width="0.8" fill="none"/></g><rect x="195.4" y="450.4" width="1" height="0.9" fill="#353535"/><rect x="197.6" y="450.4" width="1" height="0.9" fill="#353535"/>
<rect x="211" y="447.8" width="7.4" height="9" fill="#353535"/><path d="M212,455.4 L217.4,449.4" stroke="#d4d4d4" stroke-width="0.9"/>
<rect x="237.8" y="448.2" width="7.2" height="8.2" fill="#3a3a3a"/><rect x="246.6" y="448.2" width="7.2" height="8.2" fill="#3a3a3a"/><rect x="255.4" y="448.2" width="7.2" height="8.2" fill="#3a3a3a"/>
<rect x="273.6" y="447.7" width="39.9" height="9.5" rx="1" fill="#1e1e1e"/>
<path d="M307,451.4 L309.4,453.6 L311.8,451.4" stroke="#b4b4b4" stroke-width="0.8" fill="none"/>
<rect x="317.1" y="448.2" width="7.5" height="8.2" fill="#3a3a3a"/>
<g fill="none" stroke="#8f8f8f" stroke-width="0.7"><circle cx="376" cy="452.3" r="3.3"/><path d="M376,452.3 m-1.8,0 a1.8,1.8 0 1 1 1.8,1.8"/></g>
<rect x="383.2" y="447.7" width="53" height="9.5" rx="1" fill="#1e1e1e"/>
<path d="M428.2,451.4 L430.7,453.6 L433.2,451.4" stroke="#b4b4b4" stroke-width="0.8" fill="none"/>
<!-- time area -->
<rect x="447.4" y="435.4" width="1.2" height="71.6" fill="#1a1a1a"/>
<rect x="448.6" y="446.4" width="303.4" height="60.6" fill="#323232"/>
<rect x="448.6" y="446.4" width="3.6" height="60.6" fill="#1f1f1f"/>
<rect x="448.6" y="418.1" width="303.4" height="4.1" fill="#6e6e6e"/>
<path d="M453.6,418.1 L450.6,418.1 C447.6,418.1 447.6,422.2 450.6,422.2 L453.6,422.2 Z" fill="#2d8ceb"/>
<rect x="448.6" y="422.2" width="303.4" height="0.8" fill="#181818"/>
<g stroke="#8a8a8a" stroke-width="0.6"><path d="M520.3,431.8 L520.3,434.4 M588.3,431.8 L588.3,434.4 M656.3,431.8 L656.3,434.4 M724.2,431.8 L724.2,434.4"/></g>
<rect x="448.6" y="434.6" width="303.4" height="0.8" fill="#181818"/>
<rect x="448.6" y="435.4" width="303.4" height="8.3" fill="#606060"/>
<rect x="448.6" y="435.4" width="3.8" height="8.3" rx="1.4" fill="#2d8ceb"/><rect x="450.6" y="435.4" width="1.8" height="8.3" fill="#2d8ceb"/>
<rect x="452.8" y="443.7" width="299.2" height="3.2" fill="#123a14"/>
<rect x="452.8" y="444.3" width="299.2" height="1.8" fill="#12c01e"/>
<rect x="448.6" y="446.9" width="303.4" height="0.8" fill="#1c1c1c"/>
<rect x="448.6" y="447" width="4.6" height="10.8" fill="#3c3c3c"/>
<linearGradient id="lb" x1="0" y1="0" x2="0" y2="1"><stop offset="0" stop-color="#aeadd6"/><stop offset="0.2" stop-color="#a3a2cc"/><stop offset="0.8" stop-color="#9b9ac5"/><stop offset="1" stop-color="#8d8cb6"/></linearGradient>
<rect x="453.1" y="447.7" width="298.9" height="10" fill="url(#lb)"/>
<rect x="448.6" y="457.7" width="303.4" height="0.8" fill="#1c1c1c"/>
<!-- playhead -->
<rect x="452" y="430" width="1.1" height="77" fill="#2d8ceb"/>
<path d="M449.1,426.6 L455.9,426.6 L455.9,431 L452.5,434.6 L449.1,431 Z" fill="#2d8ceb"/>
</svg>
<!--SHAPES-->
<span class="t" style="left:38.8px;top:32.4px;color:#9c9c9c">效果控件</span>
<span class="t l b" style="left:69.1px;top:32.4px;width:120.4px;overflow:hidden;font-size:6.55px">bd735d76fa1392a0014c2a378802abcd.png</span>
<span class="t" style="left:4px;top:46.6px">合成 <span class="l" style="font-size:6.58px">1<span style="margin:0 2.9px 0 2.7px">•</span>bd735d76fa1392a0014c2a378802abcd.png</span></span>
<span class="t" style="left:320.1px;top:15.2px;color:#989898">对齐</span>
<span class="t" style="left:253.9px;top:32.4px;color:#9c9c9c">合成</span>
<span class="t b" style="left:270.5px;top:32.4px">合成 <span class="l" style="margin-left:1px">1</span></span>
<span class="t" style="left:323.9px;top:31.5px;color:#9c9c9c">图层（无）</span>
<span class="t b" style="left:233.2px;top:47px">合成 <span class="l">1</span></span>
<span class="t l" style="left:246.4px;top:384.8px;color:#b4b4b4">25%</span>
<span class="t l" style="left:314.5px;top:384.8px;color:#7a7a7a">0;00;00;00</span>
<span class="t" style="left:393.7px;top:384.3px;color:#b4b4b4">完整</span>
<span class="t" style="left:471.8px;top:384.3px;color:#b4b4b4">活动摄像机</span>
<span class="t" style="left:536.1px;top:384.3px;color:#b4b4b4"><span class="l">1</span> 个...</span>
<span class="t l b" style="left:639.7px;top:384.8px">+0.0</span>
<span class="t" style="left:136.9px;top:13px;font-family:'Liberation Serif',serif;font-size:12.5px;color:#b9b9b9;line-height:12px;height:12px;transform:scaleX(1.22);transform-origin:50% 50%">T</span>
<span class="t" style="left:16.8px;top:400.8px;color:#8f8f8f">渲染队列</span>
<span class="t" style="left:90.6px;top:400.8px;color:#c9c9c9">合成 <span class="l" style="margin-left:1.6px">1</span></span>
<span class="t b" style="left:7.2px;top:416px;font-size:9.6px;font-weight:bold;letter-spacing:0.25px">0;00;00;00</span>
<span class="t" style="left:8px;top:425.2px;font-size:5.8px;color:#1e65b0">00000 (29.97 fps)</span>
<span class="t l" style="left:63.6px;top:437.2px;color:#b4b4b4">#</span>
<span class="t" style="left:83px;top:436.9px;color:#b4b4b4">源名称</span>
<span class="t" style="left:220.2px;top:436.9px;color:#a4a4a4;font-style:italic;font-weight:bold;font-size:7.6px;letter-spacing:-0.3px">fx</span>
<span class="t" style="left:275.2px;top:436.9px;color:#b4b4b4">模式</span>
<span class="t l" style="left:319.8px;top:437.2px;color:#8f8f8f">T</span>
<span class="t l" style="left:329.7px;top:437.2px;color:#8f8f8f">TrkMat</span>
<span class="t" style="left:373.1px;top:436.9px;color:#b4b4b4">父级</span>
<span class="t l" style="left:63.8px;top:448.1px;color:#d4d4d4">1</span>
<span class="t" style="left:94.1px;top:447.9px;color:#161616;font-weight:bold;font-size:7.05px">bd735d7...378802abcd.png</span>
<span class="t" style="left:277.2px;top:447.7px;color:#c9c9c9">正常</span>
<span class="t" style="left:387px;top:447.7px;color:#c9c9c9">无</span>
<span class="t" style="left:450.4px;top:423.2px;font-size:5.7px;color:#a4a4a4">00s</span>
<span class="t" style="left:511.8px;top:423.2px;font-size:5.7px;color:#a4a4a4">00:15s</span>
<span class="t" style="left:579.8px;top:423.2px;font-size:5.7px;color:#a4a4a4">00:30s</span>
<span class="t" style="left:647.8px;top:423.2px;font-size:5.7px;color:#a4a4a4">00:45s</span>
<span class="t" style="left:715.8px;top:423.2px;font-size:5.7px;color:#a4a4a4">01:00s</span>
<!--TEXT-->
</body></html>
